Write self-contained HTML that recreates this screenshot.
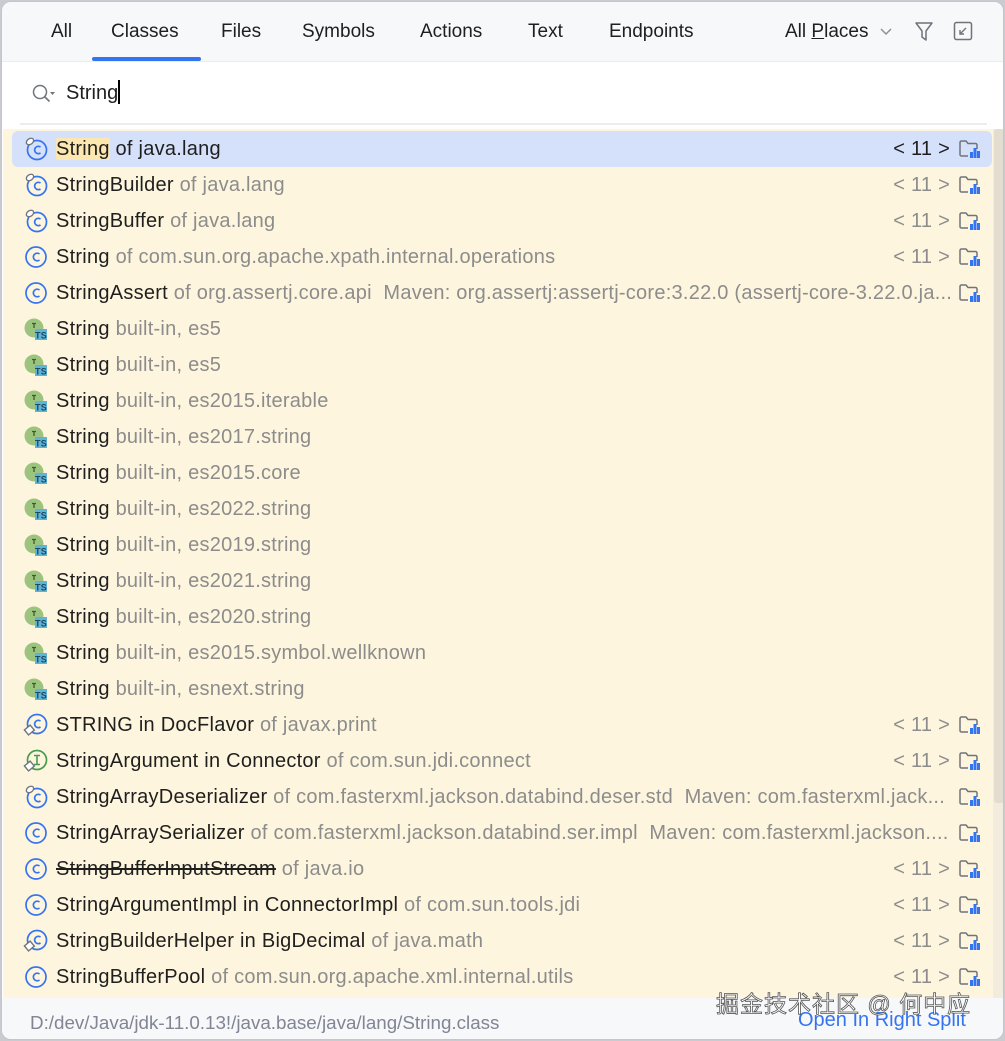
<!DOCTYPE html>
<html><head><meta charset="utf-8"><style>
*{margin:0;padding:0;box-sizing:border-box}
body{width:1005px;height:1041px;background:#c9cbd1;font-family:"Liberation Sans","Noto Sans CJK SC",sans-serif;overflow:hidden;position:relative}
.win{position:absolute;left:1px;top:1px;width:1003px;height:1039px;background:#fff;border-radius:10px;overflow:hidden;border:1px solid #c4c6cc}
.hdr{position:absolute;left:0;top:0;width:100%;height:60px;background:#f7f8fa;border-bottom:1px solid #ebecf0}
.tab{position:absolute;top:19px;font-size:19px;color:#1f1f1f}
.ul{position:absolute;left:90px;top:55px;width:109px;height:4px;background:#3574f0;border-radius:2px}
.search{position:absolute;top:78px;left:64px;font-size:20px;color:#1f1f1f}
.sep{position:absolute;left:18px;top:121px;width:967px;height:2px;background:#ebecf0}
.list{position:absolute;left:1px;top:127px;width:990px;height:869px;background:#fdf5dd}
.sb{position:absolute;left:991px;top:127px;width:12px;height:869px;background:#f2ecdc}
.thumb{position:absolute;left:992px;top:127px;width:10px;height:674px;background:#e2ddce;border-radius:3px}
.row{position:absolute;left:0;width:990px;height:36px;font-size:20px;letter-spacing:0.25px;line-height:36px;white-space:nowrap;color:#1f1f1f}
.row.sel{left:9px;width:980px;background:#d5e1fb;border-radius:6px}
.row .t{position:absolute;left:53px}
.row.sel .t{left:44px}
.g{color:#8c8c8c}
.hl{background:#fde7b0;border-radius:2px}
.ic{position:absolute;left:20px;top:5px}
.row.sel .ic{left:11px}
.nav{position:absolute;right:43px;color:#8c8c8c}
.row.sel .nav{right:42px;color:#1f1f1f}
.fd{position:absolute;right:12px;top:6px}
.row.sel .fd{right:11px}
.ftr{position:absolute;left:0;top:996px;width:100%;height:44px;background:#f7f8fa}
.path{position:absolute;left:28px;top:1010px;font-size:18.8px;color:#818594}
.open{position:absolute;left:796px;top:1007px;font-size:20px;color:#3574f0}
.wm{position:absolute;left:714px;top:983px;font-size:23px;color:#fff;-webkit-text-stroke:0.8px #555;letter-spacing:1px}
s{text-decoration:line-through}
</style></head><body>
<svg width="0" height="0" style="position:absolute">
<defs>
<symbol id="c" viewBox="0 0 26 26"><circle cx="13" cy="13" r="10" fill="none" stroke="#3574f0" stroke-width="1.7"/><path d="M16.5 10a3.8 3.8 0 1 0 0 6" fill="none" stroke="#3574f0" stroke-width="1.7"/></symbol>
<symbol id="cb" viewBox="0 0 26 26"><circle cx="14" cy="14" r="9.5" fill="none" stroke="#3574f0" stroke-width="1.7"/><path d="M17.5 11a3.7 3.7 0 1 0 0 6" fill="none" stroke="#3574f0" stroke-width="1.7"/><ellipse cx="7" cy="5.5" rx="4" ry="2.8" transform="rotate(-35 7 5.5)" fill="#fff" stroke="#6f737a" stroke-width="1.3"/></symbol>
<symbol id="cf" viewBox="0 0 26 26"><circle cx="14" cy="12" r="9.5" fill="none" stroke="#3574f0" stroke-width="1.7"/><path d="M17.5 9a3.7 3.7 0 1 0 0 6" fill="none" stroke="#3574f0" stroke-width="1.7"/><rect x="2.5" y="15" width="7.5" height="6.5" transform="rotate(-40 6 18)" fill="#fff" stroke="#6f737a" stroke-width="1.4"/></symbol>
<symbol id="if" viewBox="0 0 26 26"><circle cx="14" cy="12" r="9.5" fill="none" stroke="#4a9b52" stroke-width="1.7"/><path d="M11 7.5h6M14 7.5v9M11 16.5h6" stroke="#4a9b52" stroke-width="1.6"/><rect x="2.5" y="15" width="7.5" height="6.5" transform="rotate(-40 6 18)" fill="#fff" stroke="#6f737a" stroke-width="1.4"/></symbol>
<symbol id="ts" viewBox="0 0 26 26"><circle cx="11" cy="12" r="9.5" fill="#9dc47e"/><path d="M9 7.5h4M11 7.5v4.5" stroke="#3d5c2c" stroke-width="1.3"/><rect x="12" y="13" width="12" height="11" fill="#5fb3d6"/><text x="18" y="22.5" font-size="9" font-family="Liberation Sans" font-weight="bold" text-anchor="middle" fill="#1d4a63">TS</text></symbol>
<symbol id="fo" viewBox="0 0 24 24"><path d="M11 19H4.5a1.5 1.5 0 0 1-1.5-1.5V5.5A1.5 1.5 0 0 1 4.5 4H9l2 2.5h7.5a1.5 1.5 0 0 1 1.5 1.5V12" fill="none" stroke="#6f737a" stroke-width="1.5"/><rect x="13" y="15" width="3" height="6" fill="#3574f0"/><rect x="16.5" y="11" width="3" height="10" fill="#3574f0"/><rect x="20" y="14" width="3" height="7" fill="#3574f0"/></symbol>
</defs></svg>
<div class="win">
<div class="hdr">
<span class="tab" style="left:49px">All</span>
<span class="tab" style="left:109px">Classes</span>
<span class="tab" style="left:219px">Files</span>
<span class="tab" style="left:300px">Symbols</span>
<span class="tab" style="left:418px">Actions</span>
<span class="tab" style="left:526px">Text</span>
<span class="tab" style="left:607px">Endpoints</span>
<span class="tab" style="left:783px">All <u>P</u>laces</span>
<svg style="position:absolute;left:877px;top:25px" width="14" height="10"><path d="M2 2l5 5 5-5" fill="none" stroke="#8c8c8c" stroke-width="1.4"/></svg>
<svg style="position:absolute;left:912px;top:19px" width="20" height="22"><path d="M2 2h16l-6 8v9l-4-3v-6z" fill="none" stroke="#6f737a" stroke-width="1.5" stroke-linejoin="round"/></svg>
<svg style="position:absolute;left:951px;top:19px" width="20" height="20"><rect x="1.5" y="1.5" width="17" height="17" rx="2" fill="none" stroke="#6f737a" stroke-width="1.5"/><path d="M13 7l-6 6M7 9v4h4" fill="none" stroke="#6f737a" stroke-width="1.4"/></svg>
<div class="ul"></div>
</div>
<svg style="position:absolute;left:29px;top:81px" width="26" height="22"><circle cx="9" cy="9" r="6.5" fill="none" stroke="#6f737a" stroke-width="1.5"/><path d="M13.5 13.5l5 5" stroke="#6f737a" stroke-width="1.6"/><path d="M19 9h5l-2.5 3z" fill="#6f737a"/></svg>
<span class="search">String<span style="display:inline-block;width:1.5px;height:24px;background:#000;vertical-align:-5px"></span></span>
<div class="sep"></div>
<div class="list">
<div class="row sel" style="top:2px"><svg class="ic" width="26" height="26"><use href="#cb"/></svg><span class="t"><span class="hl">String</span> of java.lang</span><span class="nav">&lt; 11 &gt;</span><svg class="fd" width="24" height="24"><use href="#fo"/></svg></div>
<div class="row" style="top:38px"><svg class="ic" width="26" height="26"><use href="#cb"/></svg><span class="t">StringBuilder <span class="g">of java.lang</span></span><span class="nav">&lt; 11 &gt;</span><svg class="fd" width="24" height="24"><use href="#fo"/></svg></div>
<div class="row" style="top:74px"><svg class="ic" width="26" height="26"><use href="#cb"/></svg><span class="t">StringBuffer <span class="g">of java.lang</span></span><span class="nav">&lt; 11 &gt;</span><svg class="fd" width="24" height="24"><use href="#fo"/></svg></div>
<div class="row" style="top:110px"><svg class="ic" width="26" height="26"><use href="#c"/></svg><span class="t">String <span class="g">of com.sun.org.apache.xpath.internal.operations</span></span><span class="nav">&lt; 11 &gt;</span><svg class="fd" width="24" height="24"><use href="#fo"/></svg></div>
<div class="row" style="top:146px"><svg class="ic" width="26" height="26"><use href="#c"/></svg><span class="t">StringAssert <span class="g">of org.assertj.core.api&nbsp; Maven: org.assertj:assertj-core:3.22.0 (assertj-core-3.22.0.ja...</span></span><svg class="fd" width="24" height="24"><use href="#fo"/></svg></div>
<div class="row" style="top:182px"><svg class="ic" width="26" height="26"><use href="#ts"/></svg><span class="t">String <span class="g">built-in, es5</span></span></div>
<div class="row" style="top:218px"><svg class="ic" width="26" height="26"><use href="#ts"/></svg><span class="t">String <span class="g">built-in, es5</span></span></div>
<div class="row" style="top:254px"><svg class="ic" width="26" height="26"><use href="#ts"/></svg><span class="t">String <span class="g">built-in, es2015.iterable</span></span></div>
<div class="row" style="top:290px"><svg class="ic" width="26" height="26"><use href="#ts"/></svg><span class="t">String <span class="g">built-in, es2017.string</span></span></div>
<div class="row" style="top:326px"><svg class="ic" width="26" height="26"><use href="#ts"/></svg><span class="t">String <span class="g">built-in, es2015.core</span></span></div>
<div class="row" style="top:362px"><svg class="ic" width="26" height="26"><use href="#ts"/></svg><span class="t">String <span class="g">built-in, es2022.string</span></span></div>
<div class="row" style="top:398px"><svg class="ic" width="26" height="26"><use href="#ts"/></svg><span class="t">String <span class="g">built-in, es2019.string</span></span></div>
<div class="row" style="top:434px"><svg class="ic" width="26" height="26"><use href="#ts"/></svg><span class="t">String <span class="g">built-in, es2021.string</span></span></div>
<div class="row" style="top:470px"><svg class="ic" width="26" height="26"><use href="#ts"/></svg><span class="t">String <span class="g">built-in, es2020.string</span></span></div>
<div class="row" style="top:506px"><svg class="ic" width="26" height="26"><use href="#ts"/></svg><span class="t">String <span class="g">built-in, es2015.symbol.wellknown</span></span></div>
<div class="row" style="top:542px"><svg class="ic" width="26" height="26"><use href="#ts"/></svg><span class="t">String <span class="g">built-in, esnext.string</span></span></div>
<div class="row" style="top:578px"><svg class="ic" width="26" height="26"><use href="#cf"/></svg><span class="t">STRING in DocFlavor <span class="g">of javax.print</span></span><span class="nav">&lt; 11 &gt;</span><svg class="fd" width="24" height="24"><use href="#fo"/></svg></div>
<div class="row" style="top:614px"><svg class="ic" width="26" height="26"><use href="#if"/></svg><span class="t">StringArgument in Connector <span class="g">of com.sun.jdi.connect</span></span><span class="nav">&lt; 11 &gt;</span><svg class="fd" width="24" height="24"><use href="#fo"/></svg></div>
<div class="row" style="top:650px"><svg class="ic" width="26" height="26"><use href="#cb"/></svg><span class="t">StringArrayDeserializer <span class="g">of com.fasterxml.jackson.databind.deser.std&nbsp; Maven: com.fasterxml.jack...</span></span><svg class="fd" width="24" height="24"><use href="#fo"/></svg></div>
<div class="row" style="top:686px"><svg class="ic" width="26" height="26"><use href="#c"/></svg><span class="t">StringArraySerializer <span class="g">of com.fasterxml.jackson.databind.ser.impl&nbsp; Maven: com.fasterxml.jackson....</span></span><svg class="fd" width="24" height="24"><use href="#fo"/></svg></div>
<div class="row" style="top:722px"><svg class="ic" width="26" height="26"><use href="#c"/></svg><span class="t"><s>StringBufferInputStream</s> <span class="g">of java.io</span></span><span class="nav">&lt; 11 &gt;</span><svg class="fd" width="24" height="24"><use href="#fo"/></svg></div>
<div class="row" style="top:758px"><svg class="ic" width="26" height="26"><use href="#c"/></svg><span class="t">StringArgumentImpl in ConnectorImpl <span class="g">of com.sun.tools.jdi</span></span><span class="nav">&lt; 11 &gt;</span><svg class="fd" width="24" height="24"><use href="#fo"/></svg></div>
<div class="row" style="top:794px"><svg class="ic" width="26" height="26"><use href="#cf"/></svg><span class="t">StringBuilderHelper in BigDecimal <span class="g">of java.math</span></span><span class="nav">&lt; 11 &gt;</span><svg class="fd" width="24" height="24"><use href="#fo"/></svg></div>
<div class="row" style="top:830px"><svg class="ic" width="26" height="26"><use href="#c"/></svg><span class="t">StringBufferPool <span class="g">of com.sun.org.apache.xml.internal.utils</span></span><span class="nav">&lt; 11 &gt;</span><svg class="fd" width="24" height="24"><use href="#fo"/></svg></div>
</div>
<div class="sb"></div><div class="thumb"></div>
<div class="ftr"></div>
<span class="path">D:/dev/Java/jdk-11.0.13!/java.base/java/lang/String.class</span>
<span class="open">Open In Right Split</span>
<span class="wm">掘金技术社区 @ 何中应</span>
</div>
</body></html>
